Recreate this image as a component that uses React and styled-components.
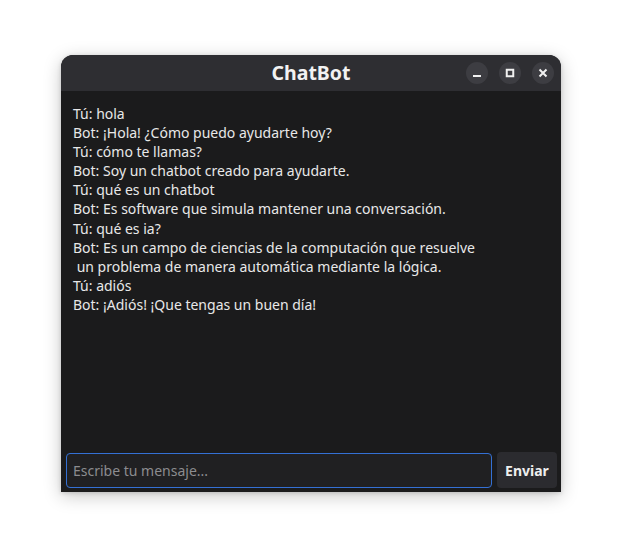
import React from "react";
import styled, { createGlobalStyle } from "styled-components";

const Global = createGlobalStyle`
  html, body { margin: 0; padding: 0; background: #ffffff; }
  body { font-family: "Noto Sans", "Open Sans", sans-serif; }
`;

const Page = styled.div`
  width: 622px;
  height: 559px;
  padding: 55px 0 0 61px;
  box-sizing: border-box;
`;

const Window = styled.div`
  width: 500px;
  height: 437px;
  display: flex;
  flex-direction: column;
  border-radius: 12px 12px 0 0;
  overflow: hidden;
  background: #1b1b1c;
  box-shadow: 0 4px 18px rgba(0, 0, 0, 0.22), 0 1px 4px rgba(0, 0, 0, 0.15);
`;

const TitleBar = styled.div`
  height: 36px;
  flex: none;
  background: #2e2e32;
  display: flex;
  align-items: center;
  justify-content: center;
  position: relative;
`;

const Title = styled.div`
  color: #f2f2f2;
  font-weight: 700;
  font-size: 19.5px;
  line-height: 24px;
  margin-top: -1px;
`;

const Controls = styled.div`
  position: absolute;
  right: 7px;
  top: 7px;
  display: flex;
  gap: 11px;
`;

const CtrlButton = styled.div`
  width: 22px;
  height: 22px;
  border-radius: 50%;
  background: #3d3d42;
  display: flex;
  align-items: center;
  justify-content: center;
`;

const Messages = styled.div`
  flex: 1;
  padding: 13px 12px 0 12px;
  color: #e8e8e8;
  font-size: 14px;
  line-height: 19.1px;
`;

const Line = styled.div`
  white-space: pre;
`;

const InputRow = styled.div`
  display: flex;
  align-items: center;
  gap: 5px;
  padding: 0 4px 4px 5px;
`;

const Input = styled.input`
  flex: 1;
  height: 35px;
  box-sizing: border-box;
  background: #202022;
  border: 1px solid #3470d4;
  border-radius: 4px;
  color: #e8e8e8;
  font-family: "Noto Sans", sans-serif;
  font-size: 14px;
  padding: 0 6px;
  outline: none;
  &::placeholder { color: #8c8c8f; }
`;

const SendButton = styled.button`
  width: 60px;
  height: 36px;
  background: #2b2b2f;
  border: none;
  border-radius: 4px;
  color: #eeeeee;
  font-family: "Noto Sans", sans-serif;
  font-weight: 700;
  font-size: 14px;
  padding: 0;
`;

const lines = [
  "Tú: hola",
  "Bot: ¡Hola! ¿Cómo puedo ayudarte hoy?",
  "Tú: cómo te llamas?",
  "Bot: Soy un chatbot creado para ayudarte.",
  "Tú: qué es un chatbot",
  "Bot: Es software que simula mantener una conversación.",
  "Tú: qué es ia?",
  "Bot: Es un campo de ciencias de la computación que resuelve",
  " un problema de manera automática mediante la lógica.",
  "Tú: adiós",
  "Bot: ¡Adiós! ¡Que tengas un buen día!",
];

export default function App() {
  return (
    <Page>
      <Global />
      <Window>
        <TitleBar>
          <Title>ChatBot</Title>
          <Controls>
            <CtrlButton>
              <svg width="10" height="10" viewBox="0 0 10 10">
                <rect x="1" y="7" width="8" height="2" fill="#f0f0f0" />
              </svg>
            </CtrlButton>
            <CtrlButton>
              <svg width="10" height="10" viewBox="0 0 10 10">
                <rect x="1.75" y="1.75" width="6.5" height="6.5" fill="none" stroke="#f0f0f0" strokeWidth="2" />
              </svg>
            </CtrlButton>
            <CtrlButton>
              <svg width="10" height="10" viewBox="0 0 10 10">
                <path d="M1.5 1.5 L8.5 8.5 M8.5 1.5 L1.5 8.5" stroke="#f0f0f0" strokeWidth="2" />
              </svg>
            </CtrlButton>
          </Controls>
        </TitleBar>
        <Messages>
          {lines.map((l, i) => (
            <Line key={i}>{l}</Line>
          ))}
        </Messages>
        <InputRow>
          <Input placeholder="Escribe tu mensaje..." />
          <SendButton>Enviar</SendButton>
        </InputRow>
      </Window>
    </Page>
  );
}
